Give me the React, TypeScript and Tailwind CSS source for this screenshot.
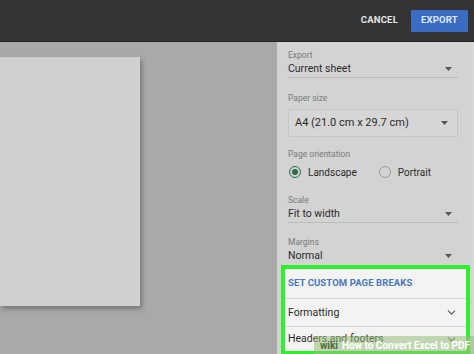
import { ChevronDown } from "lucide-react";

const font = { fontFamily: "Roboto, 'Liberation Sans', sans-serif" };

function Caret() {
  return (
    <svg width="7" height="4" viewBox="0 0 7 4" className="shrink-0">
      <path d="M0 0h7L3.5 4z" fill="#555" />
    </svg>
  );
}

function Label({ text, className }: { text: string; className?: string }) {
  return <div className={`h-[12px] text-[8.5px] leading-[12px] text-[#7a7a7a] ${className ?? ""}`}>{text}</div>;
}

function Select({ value }: { value: string }) {
  return (
    <div className="mr-[15px] flex h-[17px] items-center justify-between border-b border-[#bcbcbc] pr-[6px]">
      <span className="text-[10.5px] leading-[14px] text-[#2b2b2b]">{value}</span>
      <Caret />
    </div>
  );
}

function Radio({ checked, label }: { checked?: boolean; label: string }) {
  return (
    <div className="flex items-center gap-[7px]">
      <div
        className={`flex h-[12px] w-[12px] items-center justify-center rounded-full border-[1.5px] ${
          checked ? "border-[#2e6b46]" : "border-[#9a9a9a]"
        }`}
      >
        {checked && <div className="h-[6px] w-[6px] rounded-full bg-[#2e6b46]" />}
      </div>
      <span className="text-[10px] text-[#2b2b2b]">{label}</span>
    </div>
  );
}

export default function App() {
  return (
    <div className="relative flex h-[354px] w-[474px] flex-col overflow-hidden bg-[#a9a9a9]" style={font}>
      <header className="flex h-[42px] shrink-0 items-center justify-end border-b border-[#222] bg-[#343434] pr-[6px]">
        <button className="mr-[13px] text-[9.5px] font-bold tracking-[0.2px] text-[#e6e6e6]">CANCEL</button>
        <button className="h-[22px] w-[57px] rounded-[1px] bg-[#3a6cc4] text-[9.5px] font-bold tracking-[0.2px] text-[#dfe8f7]">
          EXPORT
        </button>
      </header>

      <div className="flex min-h-0 flex-1">
        <div className="relative flex-1">
          <div className="mt-[15px] h-[249px] w-[140px] bg-[#d0d0d0] shadow-[2px_3px_5px_rgba(0,0,0,0.3)]" />
        </div>

        <aside className="w-[197px] shrink-0 border-r border-[#dedede] bg-[#d3d3d3]">
          <div className="pl-[11px] pt-[7px]">
            <Label text="Export" />
            <Select value="Current sheet" />

            <Label text="Paper size" className="mt-[14px]" />
            <div className="mr-[15px] mt-[5px] flex h-[28px] items-center justify-between rounded-[1px] border border-[#c6c6c6] bg-[#d6d6d6] pl-[6px] pr-[9px]">
              <span className="text-[11px] text-[#2b2b2b]">A4 (21.0 cm x 29.7 cm)</span>
              <Caret />
            </div>

            <Label text="Page orientation" className="mt-[11px]" />
            <div className="mt-[4px] flex h-[16px] items-center gap-[22px] pl-[1px]">
              <Radio checked label="Landscape" />
              <Radio label="Portrait" />
            </div>

            <Label text="Scale" className="mt-[14px]" />
            <Select value="Fit to width" />

            <Label text="Margins" className="mt-[13px]" />
            <div className="mr-[15px] flex h-[16px] items-center justify-between pr-[6px]">
              <span className="text-[10.5px] leading-[14px] text-[#2b2b2b]">Normal</span>
              <Caret />
            </div>
          </div>

          <div className="ml-[4px] mr-[3px] mt-[1px] border-4 border-[#2ef02e] bg-[#f3f3f3]">
            <div className="flex h-[30px] items-center border-b border-[#d6d6d6] pl-[3px]">
              <span className="text-[9.5px] font-bold tracking-[0.1px] text-[#4a78b8]">SET CUSTOM PAGE BREAKS</span>
            </div>
            <div className="flex h-[28px] items-center justify-between border-b border-[#d6d6d6] pl-[3px] pr-[8px]">
              <span className="text-[10.5px] text-[#2b2b2b]">Formatting</span>
              <ChevronDown className="h-[13px] w-[13px] text-[#555]" strokeWidth={2} />
            </div>
            <div className="flex h-[24px] items-center justify-between pl-[3px] pr-[8px]">
              <span className="text-[10.5px] text-[#2b2b2b]">Headers and footers</span>
              <ChevronDown className="h-[13px] w-[13px] text-[#555]" strokeWidth={2} />
            </div>
          </div>
        </aside>
      </div>

      <div className="absolute bottom-0 right-0 flex h-[18px] items-center gap-[4px] whitespace-nowrap bg-[rgba(150,190,120,0.55)] pl-[6px] pr-[4px]">
        <span className="text-[10px] font-bold text-[#4d6b3a]">wiki</span>
        <span className="text-[10px] font-bold text-white">How to Convert Excel to PDF</span>
      </div>
    </div>
  );
}
